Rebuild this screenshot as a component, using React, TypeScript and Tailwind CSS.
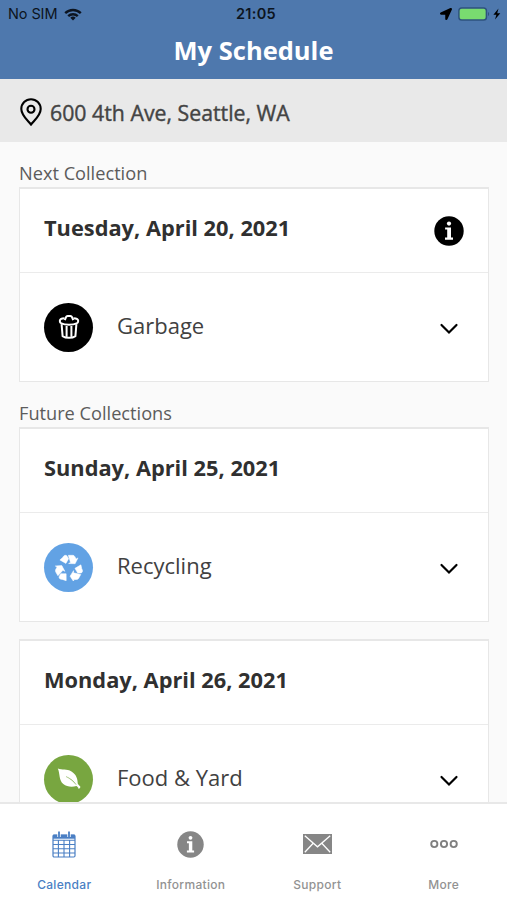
import React from 'react';

import { FaLocationArrow } from 'react-icons/fa';

interface ICollection {
    date: string;
    name: string;
    color: string;
    icon: React.ReactNode;
    hasInfo?: boolean;
}

interface ITab {
    label: string;
    icon: React.ReactNode;
    active?: boolean;
}

const InfoIcon: React.FC<{ className: string }> = ({ className }) => (
    <svg viewBox="0 0 30 30" className={className}>
        <circle cx="15" cy="15" r="14.7" fill="currentColor" />
        <circle cx="15" cy="7.6" r="2.1" fill="white" />
        <path d="M11.1 11.4h5.9v10.2h2v2.2h-8v-2.2h2.2v-8h-2.1z" fill="white" />
    </svg>
);

const WifiIcon = () => (
    <svg viewBox="0 0 18 13" className="h-[13px] w-[18px]" fill="none" stroke="#0c1420" strokeWidth="2.4">
        <path d="M1.2 5.1a11.2 11.2 0 0 1 15.6 0" />
        <path d="M4.2 8.2a7 7 0 0 1 9.6 0" />
        <path d="M9 12.4 6.3 9.8a3.9 3.9 0 0 1 5.4 0z" fill="#0c1420" stroke="none" />
    </svg>
);

const TrashIcon = () => (
    <svg viewBox="0 0 22 26" className="h-[26px] w-[22px]" fill="none" stroke="white" strokeWidth="2" strokeLinejoin="round">
        <path d="M6.5 4.3C3 4.4 1.8 5.2 1.8 7c0 1.5.7 2.1 1.5 2.4 4 1.7 11.4 1.7 15.4 0 .8-.3 1.5-.9 1.5-2.4 0-1.8-1.2-2.6-4.7-2.7" />
        <path d="M6.8 6.2 8 3.1c.3-.8.8-1 1.6-1h2.8c.8 0 1.3.2 1.6 1l1.2 3.1" />
        <path d="M3.6 10.2l1 12c3.1 2.2 9.7 2.2 12.8 0l1-12M8.6 12v10.6M13.4 12v10.6" />
    </svg>
);

const RecycleIcon = () => (
    <svg viewBox="0 0 28 27" className="h-[27px] w-7" fill="white" stroke="white" strokeWidth=".5" strokeLinejoin="round">
        {[0, 120, 240].map((angle) => (
            <g key={angle} transform={`rotate(${angle} 14 14.5)`}>
                <path d="M7.9 3.3C8.5 2.2 9.2 1.3 10.3 1.3c1.1 0 1.600.5 2 1.200l1.300 2.200-2.700 4.700-6-3.400z" />
                <path d="M13.300 1.300h4.500c.9 0 1.500.4 1.900 1.100l1.500 2.500 1.800-1-2.900 5.800-6.500-.2 1.900-1.100z" />
            </g>
        ))}
    </svg>
);

const LeafIcon = () => (
    <svg viewBox="0 0 24 22" className="h-[22px] w-6">
        <path d="M.8.5C5 2.1 9.8.7 14.5 3.4c4.7 2.8 6.3 7.5 6.2 12.2.8 1.4 1.9 2.3 2.7 3.2-.1 1.1-.7 1.8-1.7 2.1-.5-1.4-1.2-2.1-2.3-2.8-4.5 1.2-9.7.8-13.1-2.1C1.5 11.9 3.3 6 .8.5z" fill="white" />
        <path d="M9 8.5c4.3 1.8 7.6 4.3 10.2 8.2-2.5-3.1-5.9-5.9-10.2-8.2z" fill="#78a640" stroke="#78a640" strokeWidth=".3" />
    </svg>
);

const CalendarIcon = () => (
    <svg viewBox="0 0 24 27" className="h-[27px] w-6" fill="none" stroke="currentColor">
        <rect x="1" y="4" width="22" height="22" rx="1.2" strokeWidth="1.2" />
        <path d="M1 3.7h22v4H1z" fill="currentColor" stroke="none" />
        <path d="M6.4 9v17M12 9v17M17.6 9v17M1 9.3h22M1 13.5h22M1 17.8h22M1 22h22" strokeWidth="1.1" />
        <path d="M7 1v5M17 1v5" stroke="white" strokeWidth="3.4" />
        <path d="M7 .5V6M17 .5V6" strokeWidth="1.8" />
    </svg>
);

const MailIcon = () => (
    <svg viewBox="0 0 29 20" className="h-5 w-[29px]">
        <rect width="29" height="20" fill="#868686" />
        <path d="M1.8 1.8 14.5 12.8 27.2 1.8M1.8 18.2l8.4-8.9M27.2 18.2l-8.4-8.9" fill="none" stroke="white" strokeWidth="1.3" />
    </svg>
);

const MoreIcon = () => (
    <svg viewBox="0 0 28 10" className="h-[10px] w-7" fill="none" stroke="#808080" strokeWidth="1.9">
        <circle cx="4.3" cy="5" r="3.1" />
        <circle cx="14" cy="5" r="3.1" />
        <circle cx="23.7" cy="5" r="3.1" />
    </svg>
);

const nextCollection: ICollection = {
    date: 'Tuesday, April 20, 2021',
    name: 'Garbage',
    color: 'bg-black',
    icon: <TrashIcon />,
    hasInfo: true,
};

const futureCollections: ICollection[] = [
    { date: 'Sunday, April 25, 2021', name: 'Recycling', color: 'bg-[#62a2e4]', icon: <RecycleIcon /> },
    { date: 'Monday, April 26, 2021', name: 'Food & Yard', color: 'bg-[#78a640]', icon: <LeafIcon /> },
];

const tabs: ITab[] = [
    { label: 'Calendar', icon: <CalendarIcon />, active: true },
    { label: 'Information', icon: <InfoIcon className="size-[27px] text-[#868686]" /> },
    { label: 'Support', icon: <MailIcon /> },
    { label: 'More', icon: <MoreIcon /> },
];

const StatusBar = () => (
    <div className="relative flex h-7 items-center justify-between pl-2 pr-[5px] font-['Inter',sans-serif] text-[14.5px] text-[#0c1420]">
        <div className="flex items-center gap-[7px]">
            <span className="tracking-[-0.1px]">No SIM</span>
            <WifiIcon />
        </div>
        <span className="absolute inset-x-0 pl-[5px] text-center font-semibold tracking-[0.3px]">21:05</span>
        <div className="flex items-center">
            <FaLocationArrow className="mr-[6px] size-3 text-black" />
            <svg viewBox="0 0 44 14" className="h-[14px] w-[44px]">
                <rect x=".9" y=".9" width="27.5" height="12.2" rx="2.8" fill="#79db70" stroke="#2e527e" strokeWidth="1.5" />
                <path d="M30 5v4c1.5-.5 1.5-3.5 0-4z" fill="#2e527e" />
                <path d="M40.5 1.5 35.4 7.7h3L37 12.5l5.3-6.3h-3.1z" fill="black" />
            </svg>
        </div>
    </div>
);

const CollectionCard: React.FC<{ collection: ICollection }> = ({ collection }) => (
    <div className="h-[195px] shrink-0 border border-t-2 border-[#e7e7e7] bg-white">
        <div className="flex h-[84px] items-center justify-between border-b border-[#ebebeb] px-6">
            <h2 className="pb-1 text-[21.8px] font-bold text-[#303030]">{collection.date}</h2>
            {collection.hasInfo && <InfoIcon className="size-[30px] text-black" />}
        </div>
        <div className="flex h-[108px] items-center pl-6 pr-[29px]">
            <div className={`flex size-[49px] items-center justify-center rounded-full ${collection.color}`}>
                {collection.icon}
            </div>
            <span className="ml-6 flex-1 pb-1 text-[22px] text-[#414141]">{collection.name}</span>
            <svg viewBox="0 0 20 12" className="mt-[3px] h-3 w-5" fill="none" stroke="black" strokeWidth="2.2" strokeLinecap="round">
                <path d="m2.5 2 7.5 7.5L17.5 2" />
            </svg>
        </div>
    </div>
);

const App = () => {
    return (
        <div className="flex h-[900px] w-[507px] flex-col overflow-hidden bg-[#fafafa] font-['Open_Sans','Noto_Sans',sans-serif]">
            <header className="h-[79px] shrink-0 bg-[#4e78ad]">
                <StatusBar />
                <h1 className="text-center text-[25.5px] leading-[44px] font-bold text-white">My Schedule</h1>
            </header>

            <div className="flex h-[63px] shrink-0 items-center bg-[#e9e9e9] pl-5">
                <svg viewBox="0 0 22 28" className="mt-[3px] h-7 w-[22px]" fill="none" stroke="black" strokeWidth="2.1">
                    <path d="M11 26.5C8 22.6 1.3 17.4 1.3 10.9a9.7 9.7 0 0 1 19.4 0c0 6.5-6.7 11.7-9.7 15.6z" />
                    <circle cx="11" cy="11.2" r="3.5" />
                </svg>
                <span className="ml-2 pt-[5px] text-[21.3px] text-[#444444] [-webkit-text-stroke:0.4px_#444444]">
                    600 4th Ave, Seattle, WA
                </span>
            </div>

            <main className="min-h-0 flex-1 overflow-hidden pt-[18px] pr-[18px] pl-[19px]">
                <p className="h-[27px] text-[18.2px] leading-[26px] text-[#5c5c5c]">Next Collection</p>
                <CollectionCard collection={nextCollection} />
                <p className="mt-[18px] h-[27px] text-[18.2px] leading-[26px] text-[#5c5c5c]">Future Collections</p>
                <div className="flex flex-col gap-[17px]">
                    {futureCollections.map((collection) => (
                        <CollectionCard key={collection.date} collection={collection} />
                    ))}
                </div>
            </main>

            <nav className="flex h-[98px] shrink-0 border-t-2 border-[#e8e8e8] bg-white pl-px font-['Inter',sans-serif]">
                {tabs.map((tab) => (
                    <div
                        key={tab.label}
                        className={`flex flex-1 flex-col items-center pt-6 ${tab.active ? 'text-[#4a7fc4]' : 'text-[#929292]'}`}
                    >
                        <div className="flex h-8 items-center justify-center">{tab.icon}</div>
                        <span className="mt-4 text-[12px] leading-[18px] font-medium tracking-[0.3px]">{tab.label}</span>
                    </div>
                ))}
            </nav>
        </div>
    );
};

export default App;
